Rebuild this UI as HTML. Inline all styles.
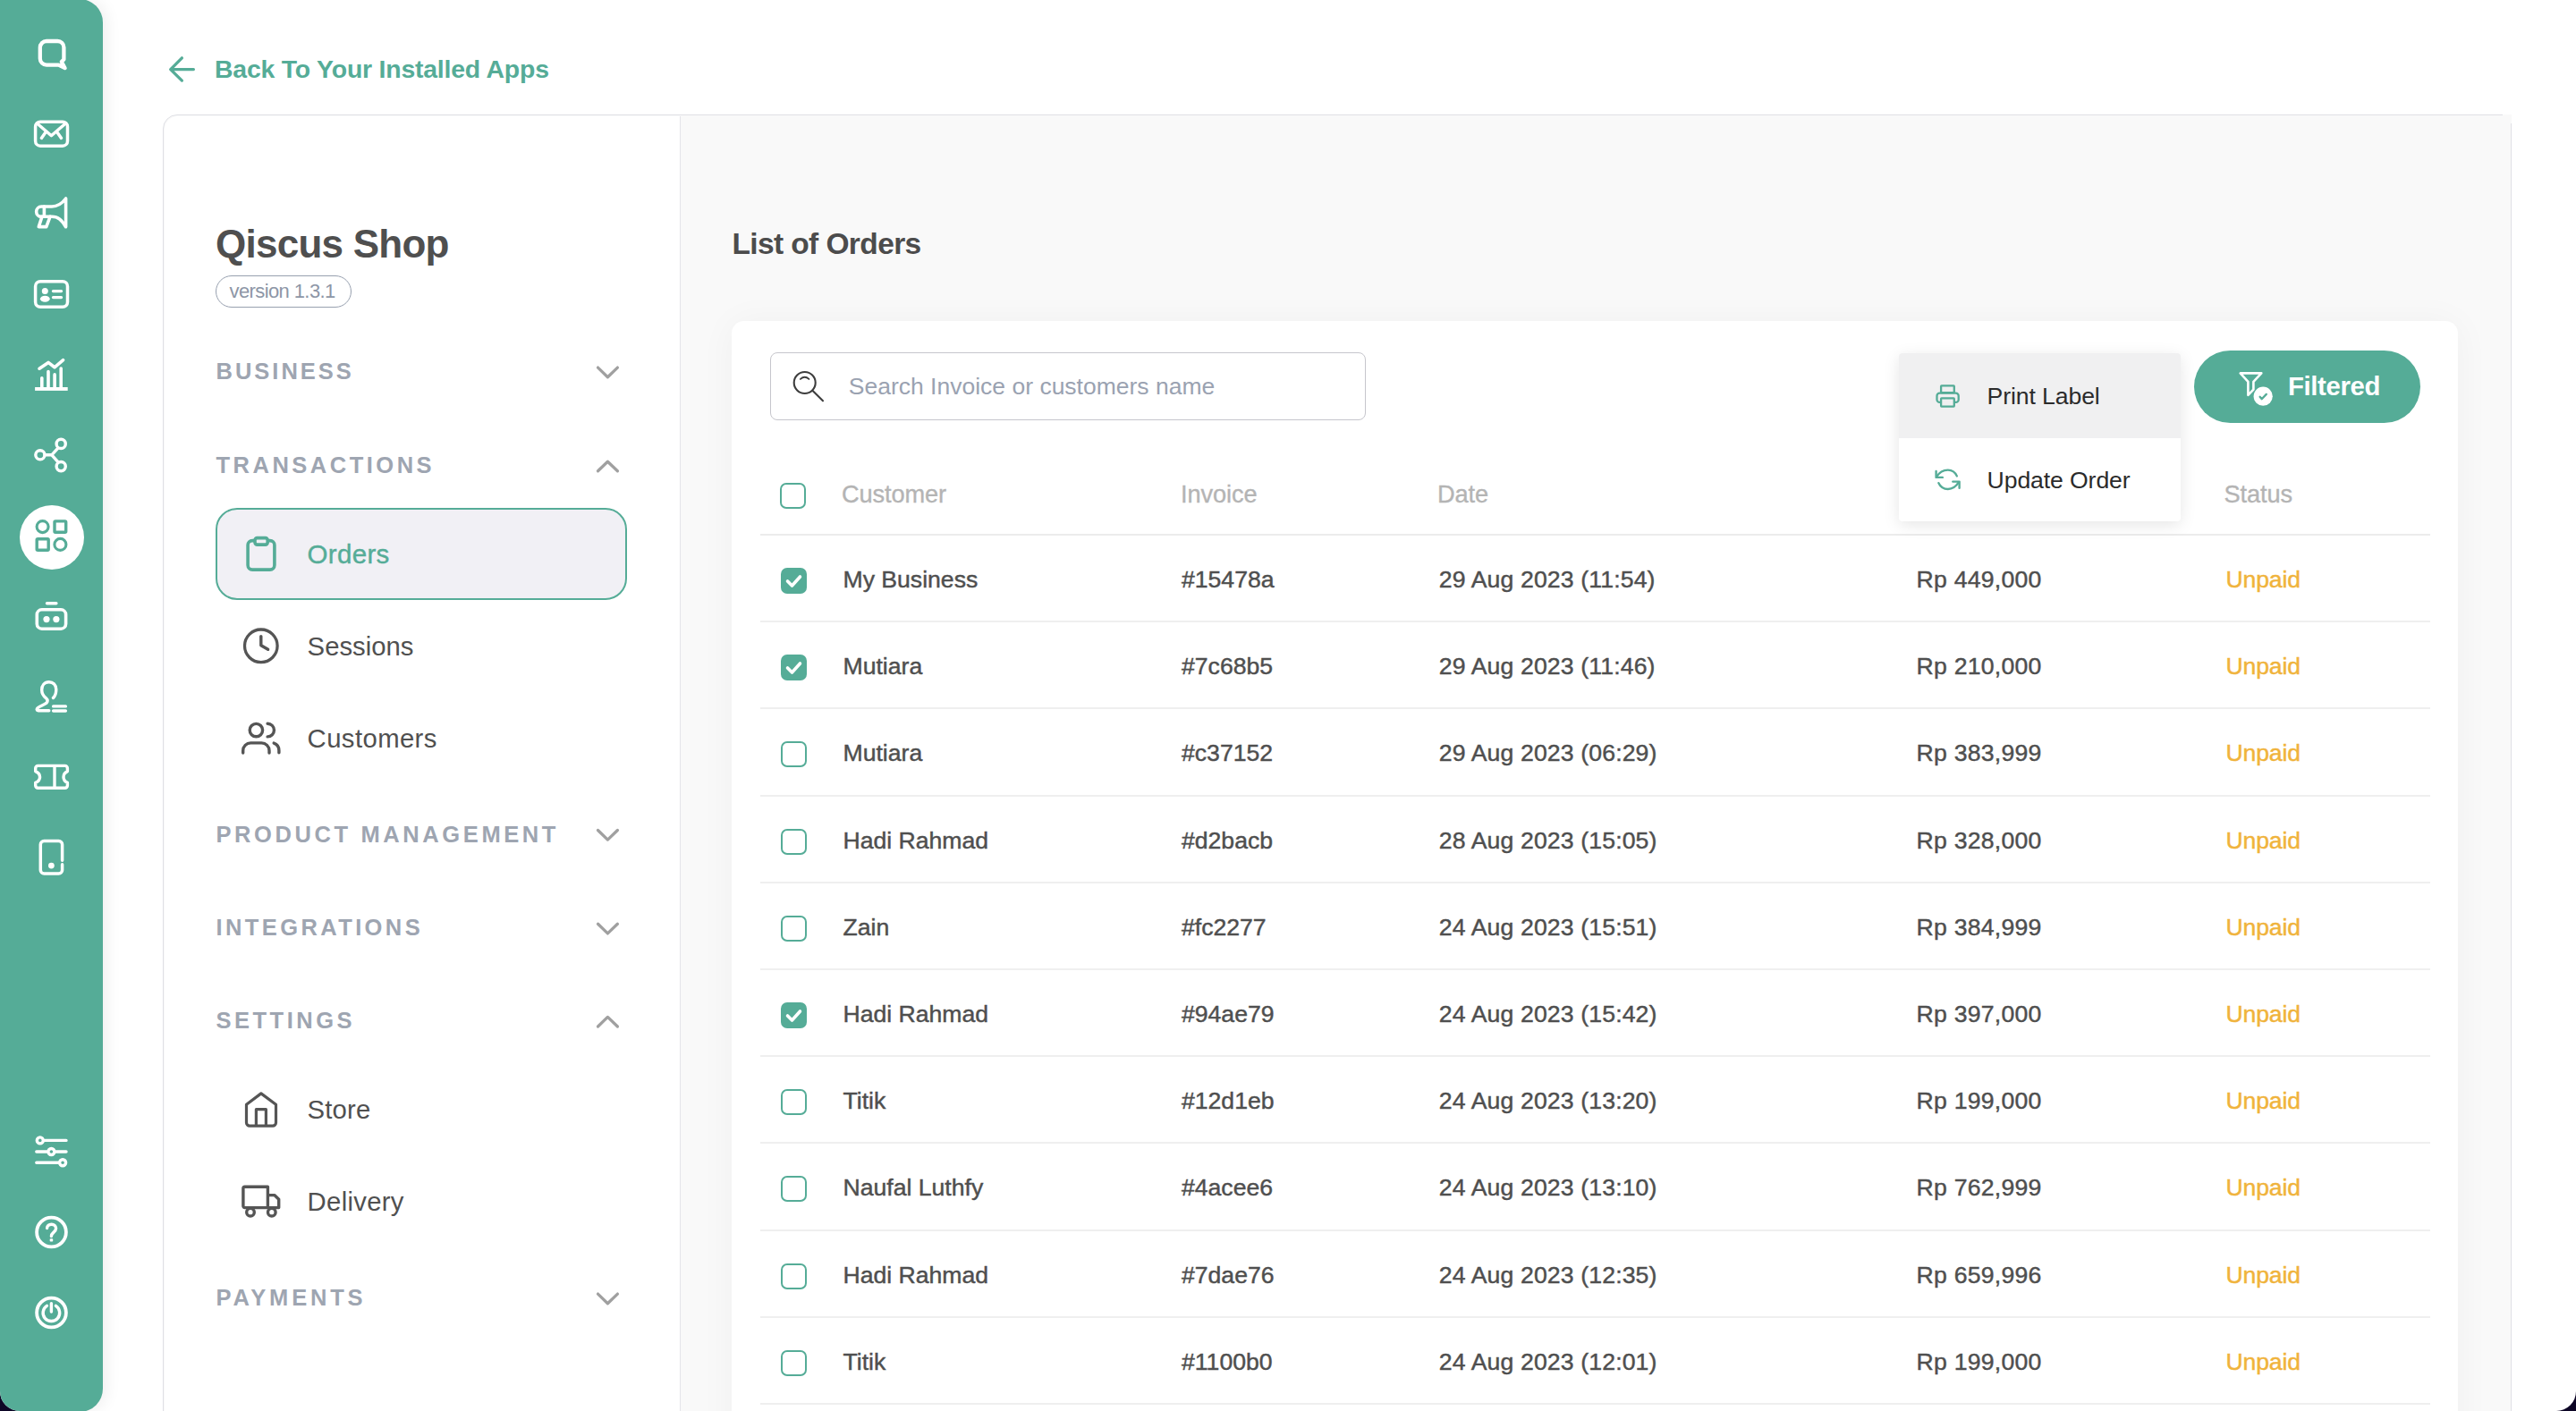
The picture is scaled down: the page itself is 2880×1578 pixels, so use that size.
<!DOCTYPE html>
<html><head><meta charset="utf-8"><title>Qiscus Shop - Orders</title><style>
html,body{margin:0;padding:0;}
html{background:#0d0626;}
body{width:2880px;height:1578px;overflow:hidden;background:#0d0626;font-family:"Liberation Sans",sans-serif;}
#win{position:absolute;left:0;top:0;width:2880px;height:1578px;overflow:hidden;background:#ffffff;border-radius:0 0 22px 22px;}
.t{position:absolute;white-space:nowrap;line-height:1;}
.i{position:absolute;overflow:visible;}
.b{position:absolute;box-sizing:border-box;}
@media (max-width:2200px){html{zoom:0.5;}}
</style><script>(function(){try{var w=window.innerWidth;if(w&&Math.abs(w-2880)>4){document.documentElement.style.zoom=(w/2880);}}catch(e){}})();</script></head><body><div id="win">
<div class="b" style="left:182px;top:128px;width:2626px;height:1500px;border:1.5px solid #dfe0e5;border-radius:16px 0 0 16px;background:#f9f9f9;"></div>
<div class="b" style="left:183.5px;top:129.5px;width:577px;height:1500px;background:#ffffff;border-right:1.5px solid #e4e4e9;border-top-left-radius:15px;"></div>
<div class="b" style="left:2798px;top:128px;width:10px;height:10px;background:#f9f9f9;"></div>
<svg class="i" style="left:176px;top:48px" width="60" height="60" viewBox="176 48 60 60"><path d="M216.4 77.6 H191 M203.4 64.8 L190.7 77.6 L203.4 90.1" fill="none" stroke="#55ac97" stroke-width="3.3" stroke-linecap="round" stroke-linejoin="round"/></svg>
<div class="t" style="left:240.00px;top:62.96px;font-size:28.4px;color:#55ac97;font-weight:700;letter-spacing:-0.2px;">Back To Your Installed Apps</div>
<div class="t" style="left:241.00px;top:251.45px;font-size:44px;color:#4f4f4f;font-weight:700;letter-spacing:-0.75px;">Qiscus Shop</div>
<div class="b" style="left:241px;top:308px;width:152px;height:36px;border:1.5px solid #97a0af;border-radius:18px;"></div>
<div class="t" style="left:256.50px;top:315.08px;font-size:22px;color:#8d96a6;font-weight:400;letter-spacing:-0.6px;">version 1.3.1</div>
<div class="t" style="left:241.50px;top:403.21px;font-size:25.5px;color:#9ea5b1;font-weight:700;letter-spacing:3.0px;">BUSINESS</div>
<svg class="i" style="left:650px;top:384px" width="60" height="60" viewBox="650 384 60 60"><path d="M668.5 411.1 L679.4 421.7 L690.4 411.1" fill="none" stroke="#a0a0a0" stroke-width="3.3" stroke-linecap="round" stroke-linejoin="round"/></svg>
<div class="t" style="left:241.50px;top:508.01px;font-size:25.5px;color:#9ea5b1;font-weight:700;letter-spacing:3.5px;">TRANSACTIONS</div>
<svg class="i" style="left:650px;top:489px" width="60" height="60" viewBox="650 489 60 60"><path d="M668.5 526.8000000000001 L679.4 516.2 L690.4 526.8000000000001" fill="none" stroke="#a0a0a0" stroke-width="3.3" stroke-linecap="round" stroke-linejoin="round"/></svg>
<div class="t" style="left:241.50px;top:920.61px;font-size:25.5px;color:#9ea5b1;font-weight:700;letter-spacing:3.6px;">PRODUCT MANAGEMENT</div>
<svg class="i" style="left:650px;top:902px" width="60" height="60" viewBox="650 902 60 60"><path d="M668.5 928.5 L679.4 939.1 L690.4 928.5" fill="none" stroke="#a0a0a0" stroke-width="3.3" stroke-linecap="round" stroke-linejoin="round"/></svg>
<div class="t" style="left:241.50px;top:1025.41px;font-size:25.5px;color:#9ea5b1;font-weight:700;letter-spacing:3.4px;">INTEGRATIONS</div>
<svg class="i" style="left:650px;top:1007px" width="60" height="60" viewBox="650 1007 60 60"><path d="M668.5 1033.3 L679.4 1043.9 L690.4 1033.3" fill="none" stroke="#a0a0a0" stroke-width="3.3" stroke-linecap="round" stroke-linejoin="round"/></svg>
<div class="t" style="left:241.50px;top:1129.21px;font-size:25.5px;color:#9ea5b1;font-weight:700;letter-spacing:3.5px;">SETTINGS</div>
<svg class="i" style="left:650px;top:1110px" width="60" height="60" viewBox="650 1110 60 60"><path d="M668.5 1148.0 L679.4 1137.3999999999999 L690.4 1148.0" fill="none" stroke="#a0a0a0" stroke-width="3.3" stroke-linecap="round" stroke-linejoin="round"/></svg>
<div class="t" style="left:241.50px;top:1439.21px;font-size:25.5px;color:#9ea5b1;font-weight:700;letter-spacing:3.8px;">PAYMENTS</div>
<svg class="i" style="left:650px;top:1420px" width="60" height="60" viewBox="650 1420 60 60"><path d="M668.5 1447.1 L679.4 1457.7 L690.4 1447.1" fill="none" stroke="#a0a0a0" stroke-width="3.3" stroke-linecap="round" stroke-linejoin="round"/></svg>
<div class="b" style="left:241px;top:568px;width:460px;height:103px;border:2px solid #55ac97;border-radius:24px;background:#f1f0f5;"></div>
<svg class="i" style="left:260px;top:590px" width="60" height="60" viewBox="260 590 60 60"><rect x="277.1" y="604.6" width="29.8" height="32.5" rx="5" fill="none" stroke="#55ac97" stroke-width="3.6"/><rect x="285" y="601.6" width="14.2" height="7.5" rx="2.5" fill="#f1f0f5" stroke="#55ac97" stroke-width="3.6"/></svg>
<div class="t" style="left:343.60px;top:604.83px;font-size:29.5px;color:#55ac97;font-weight:400;letter-spacing:0.3px;-webkit-text-stroke:0.4px #55ac97">Orders</div>
<svg class="i" style="left:260px;top:692px" width="60" height="60" viewBox="260 692 60 60"><circle cx="291.8" cy="722.3" r="18.3" fill="none" stroke="#555555" stroke-width="3.3"/><path d="M291.8 711.6 V721.8 L299.6 726.3" fill="none" stroke="#555555" stroke-width="3.4" stroke-linecap="round" stroke-linejoin="round"/></svg>
<div class="t" style="left:343.60px;top:707.70px;font-size:29.3px;color:#505050;font-weight:400;letter-spacing:0px;">Sessions</div>
<svg class="i" style="left:260px;top:796px" width="60" height="60" viewBox="260 796 60 60"><circle cx="286.4" cy="816.6" r="7.2" fill="none" stroke="#555555" stroke-width="3.4"/><path d="M299.1 809.2 A7.35 7.35 0 0 1 299.1 823.9" fill="none" stroke="#555555" stroke-width="3.4" stroke-linecap="round"/><path d="M271.7 842 V839.5 A8.6 8.6 0 0 1 280.3 830.9 H292.4 A8.6 8.6 0 0 1 301 839.5 V842" fill="none" stroke="#555555" stroke-width="3.4" stroke-linecap="round"/><path d="M306.2 831.1 A8.2 8.6 0 0 1 311.9 839.3 V841.8" fill="none" stroke="#555555" stroke-width="3.4" stroke-linecap="round"/></svg>
<div class="t" style="left:343.60px;top:810.90px;font-size:29.3px;color:#505050;font-weight:400;letter-spacing:0.4px;">Customers</div>
<svg class="i" style="left:260px;top:1212px" width="60" height="60" viewBox="260 1212 60 60"><path d="M275.5 1235.2 L291.9 1222.9 L308.5 1235.2 V1255.6 A3.6 3.6 0 0 1 304.9 1259.2 H279.1 A3.6 3.6 0 0 1 275.5 1255.6 Z" fill="none" stroke="#555555" stroke-width="3.2" stroke-linejoin="round"/><path d="M286.4 1259 V1240.7 H297.4 V1259" fill="none" stroke="#555555" stroke-width="3.2" stroke-linejoin="round"/></svg>
<div class="t" style="left:343.60px;top:1226.20px;font-size:29.3px;color:#505050;font-weight:400;letter-spacing:0.15px;">Store</div>
<svg class="i" style="left:260px;top:1314px" width="60" height="60" viewBox="260 1314 60 60"><path d="M271.9 1329 A1.8 1.8 0 0 1 273.7 1327.2 H299.4 V1350.6 H273.7 A1.8 1.8 0 0 1 271.9 1348.8 Z" fill="none" stroke="#555555" stroke-width="3.4" stroke-linejoin="round"/><path d="M299.4 1336.6 H306.8 L311.7 1341.2 V1350.6 H299.4" fill="none" stroke="#555555" stroke-width="3.4" stroke-linejoin="round"/><circle cx="280" cy="1355.7" r="4.3" fill="#fff" stroke="#555555" stroke-width="3.4"/><circle cx="303.8" cy="1355.7" r="4.3" fill="#fff" stroke="#555555" stroke-width="3.4"/></svg>
<div class="t" style="left:343.60px;top:1329.40px;font-size:29.3px;color:#505050;font-weight:400;letter-spacing:0.3px;">Delivery</div>
<div class="t" style="left:818.40px;top:256.24px;font-size:33.5px;color:#4c4c4c;font-weight:700;letter-spacing:-0.6px;">List of Orders</div>
<div class="b" style="left:818px;top:359px;width:1930px;height:1300px;background:#ffffff;border-radius:14px;box-shadow:0 2px 40px rgba(0,0,0,0.045);"></div>
<div class="b" style="left:861px;top:394px;width:666px;height:76px;border:1.5px solid #c6c6cc;border-radius:8px;background:#fff;"></div>
<svg class="i" style="left:874px;top:402px" width="60" height="60" viewBox="874 402 60 60"><circle cx="899.7" cy="428" r="12" fill="none" stroke="#3d3d3d" stroke-width="2.1"/><path d="M908.6 436.9 L920 448.3" stroke="#3d3d3d" stroke-width="2.1" stroke-linecap="round"/><path d="M894.9 423.9 Q899.7 419.8 904.4 423.9" fill="none" stroke="#3d3d3d" stroke-width="1.9" stroke-linecap="round"/></svg>
<div class="t" style="left:948.80px;top:418.57px;font-size:26.5px;color:#9aa2b1;font-weight:400;letter-spacing:0px;">Search Invoice or customers name</div>
<div class="b" style="left:872px;top:540px;width:29px;height:29px;border-radius:7px;border:2.6px solid #55ac97;background:#fff;"></div>
<div class="t" style="left:941.00px;top:538.58px;font-size:27.2px;color:#b4b4b4;font-weight:400;letter-spacing:-0.1px;-webkit-text-stroke:0.35px #b4b4b4">Customer</div>
<div class="t" style="left:1320.00px;top:538.58px;font-size:27.2px;color:#b4b4b4;font-weight:400;letter-spacing:-0.1px;-webkit-text-stroke:0.35px #b4b4b4">Invoice</div>
<div class="t" style="left:1607.00px;top:538.58px;font-size:27.2px;color:#b4b4b4;font-weight:400;letter-spacing:-0.1px;-webkit-text-stroke:0.35px #b4b4b4">Date</div>
<div class="t" style="left:2142.60px;top:538.58px;font-size:27.2px;color:#b4b4b4;font-weight:400;letter-spacing:-0.1px;-webkit-text-stroke:0.35px #b4b4b4">Amount</div>
<div class="t" style="left:2486.50px;top:538.58px;font-size:27.2px;color:#b4b4b4;font-weight:400;letter-spacing:-0.1px;-webkit-text-stroke:0.35px #b4b4b4">Status</div>
<div class="b" style="left:850px;top:597px;width:1867px;height:2px;background:#ececec;"></div>
<div class="b" style="left:873px;top:635px;width:29px;height:29px;border-radius:7px;background:#55ac97;"></div>
<svg class="i" style="left:873px;top:635px;" width="29" height="29" viewBox="0 0 29 29"><path d="M7.5 15 L12.5 20 L21.5 10" fill="none" stroke="#fff" stroke-width="3.6" stroke-linecap="round" stroke-linejoin="round"/></svg>
<div class="t" style="left:942.50px;top:634.98px;font-size:26.6px;color:#4f4f4f;font-weight:400;letter-spacing:0px;-webkit-text-stroke:0.45px #4f4f4f">My Business</div>
<div class="t" style="left:1321.00px;top:634.98px;font-size:26.6px;color:#4f4f4f;font-weight:400;letter-spacing:0px;-webkit-text-stroke:0.45px #4f4f4f">#15478a</div>
<div class="t" style="left:1608.70px;top:634.98px;font-size:26.6px;color:#4f4f4f;font-weight:400;letter-spacing:0.15px;-webkit-text-stroke:0.45px #4f4f4f">29 Aug 2023 (11:54)</div>
<div class="t" style="left:2142.60px;top:634.98px;font-size:26.6px;color:#4f4f4f;font-weight:400;letter-spacing:0.25px;-webkit-text-stroke:0.45px #4f4f4f">Rp 449,000</div>
<div class="t" style="left:2488.50px;top:634.98px;font-size:26.6px;color:#f0b33b;font-weight:400;letter-spacing:-0.15px;-webkit-text-stroke:0.45px #f0b33b">Unpaid</div>
<div class="b" style="left:850px;top:694.2px;width:1867px;height:2px;background:#efefef;"></div>
<div class="b" style="left:873px;top:732px;width:29px;height:29px;border-radius:7px;background:#55ac97;"></div>
<svg class="i" style="left:873px;top:732px;" width="29" height="29" viewBox="0 0 29 29"><path d="M7.5 15 L12.5 20 L21.5 10" fill="none" stroke="#fff" stroke-width="3.6" stroke-linecap="round" stroke-linejoin="round"/></svg>
<div class="t" style="left:942.50px;top:732.18px;font-size:26.6px;color:#4f4f4f;font-weight:400;letter-spacing:0px;-webkit-text-stroke:0.45px #4f4f4f">Mutiara</div>
<div class="t" style="left:1321.00px;top:732.18px;font-size:26.6px;color:#4f4f4f;font-weight:400;letter-spacing:0px;-webkit-text-stroke:0.45px #4f4f4f">#7c68b5</div>
<div class="t" style="left:1608.70px;top:732.18px;font-size:26.6px;color:#4f4f4f;font-weight:400;letter-spacing:0.15px;-webkit-text-stroke:0.45px #4f4f4f">29 Aug 2023 (11:46)</div>
<div class="t" style="left:2142.60px;top:732.18px;font-size:26.6px;color:#4f4f4f;font-weight:400;letter-spacing:0.25px;-webkit-text-stroke:0.45px #4f4f4f">Rp 210,000</div>
<div class="t" style="left:2488.50px;top:732.18px;font-size:26.6px;color:#f0b33b;font-weight:400;letter-spacing:-0.15px;-webkit-text-stroke:0.45px #f0b33b">Unpaid</div>
<div class="b" style="left:850px;top:791.4px;width:1867px;height:2px;background:#efefef;"></div>
<div class="b" style="left:873px;top:829px;width:29px;height:29px;border-radius:7px;border:2.6px solid #55ac97;background:#fff;"></div>
<div class="t" style="left:942.50px;top:829.38px;font-size:26.6px;color:#4f4f4f;font-weight:400;letter-spacing:0px;-webkit-text-stroke:0.45px #4f4f4f">Mutiara</div>
<div class="t" style="left:1321.00px;top:829.38px;font-size:26.6px;color:#4f4f4f;font-weight:400;letter-spacing:0px;-webkit-text-stroke:0.45px #4f4f4f">#c37152</div>
<div class="t" style="left:1608.70px;top:829.38px;font-size:26.6px;color:#4f4f4f;font-weight:400;letter-spacing:0.15px;-webkit-text-stroke:0.45px #4f4f4f">29 Aug 2023 (06:29)</div>
<div class="t" style="left:2142.60px;top:829.38px;font-size:26.6px;color:#4f4f4f;font-weight:400;letter-spacing:0.25px;-webkit-text-stroke:0.45px #4f4f4f">Rp 383,999</div>
<div class="t" style="left:2488.50px;top:829.38px;font-size:26.6px;color:#f0b33b;font-weight:400;letter-spacing:-0.15px;-webkit-text-stroke:0.45px #f0b33b">Unpaid</div>
<div class="b" style="left:850px;top:888.6px;width:1867px;height:2px;background:#efefef;"></div>
<div class="b" style="left:873px;top:927px;width:29px;height:29px;border-radius:7px;border:2.6px solid #55ac97;background:#fff;"></div>
<div class="t" style="left:942.50px;top:926.58px;font-size:26.6px;color:#4f4f4f;font-weight:400;letter-spacing:0px;-webkit-text-stroke:0.45px #4f4f4f">Hadi Rahmad</div>
<div class="t" style="left:1321.00px;top:926.58px;font-size:26.6px;color:#4f4f4f;font-weight:400;letter-spacing:0px;-webkit-text-stroke:0.45px #4f4f4f">#d2bacb</div>
<div class="t" style="left:1608.70px;top:926.58px;font-size:26.6px;color:#4f4f4f;font-weight:400;letter-spacing:0.15px;-webkit-text-stroke:0.45px #4f4f4f">28 Aug 2023 (15:05)</div>
<div class="t" style="left:2142.60px;top:926.58px;font-size:26.6px;color:#4f4f4f;font-weight:400;letter-spacing:0.25px;-webkit-text-stroke:0.45px #4f4f4f">Rp 328,000</div>
<div class="t" style="left:2488.50px;top:926.58px;font-size:26.6px;color:#f0b33b;font-weight:400;letter-spacing:-0.15px;-webkit-text-stroke:0.45px #f0b33b">Unpaid</div>
<div class="b" style="left:850px;top:985.8px;width:1867px;height:2px;background:#efefef;"></div>
<div class="b" style="left:873px;top:1024px;width:29px;height:29px;border-radius:7px;border:2.6px solid #55ac97;background:#fff;"></div>
<div class="t" style="left:942.50px;top:1023.78px;font-size:26.6px;color:#4f4f4f;font-weight:400;letter-spacing:0px;-webkit-text-stroke:0.45px #4f4f4f">Zain</div>
<div class="t" style="left:1321.00px;top:1023.78px;font-size:26.6px;color:#4f4f4f;font-weight:400;letter-spacing:0px;-webkit-text-stroke:0.45px #4f4f4f">#fc2277</div>
<div class="t" style="left:1608.70px;top:1023.78px;font-size:26.6px;color:#4f4f4f;font-weight:400;letter-spacing:0.15px;-webkit-text-stroke:0.45px #4f4f4f">24 Aug 2023 (15:51)</div>
<div class="t" style="left:2142.60px;top:1023.78px;font-size:26.6px;color:#4f4f4f;font-weight:400;letter-spacing:0.25px;-webkit-text-stroke:0.45px #4f4f4f">Rp 384,999</div>
<div class="t" style="left:2488.50px;top:1023.78px;font-size:26.6px;color:#f0b33b;font-weight:400;letter-spacing:-0.15px;-webkit-text-stroke:0.45px #f0b33b">Unpaid</div>
<div class="b" style="left:850px;top:1083.0px;width:1867px;height:2px;background:#efefef;"></div>
<div class="b" style="left:873px;top:1121px;width:29px;height:29px;border-radius:7px;background:#55ac97;"></div>
<svg class="i" style="left:873px;top:1121px;" width="29" height="29" viewBox="0 0 29 29"><path d="M7.5 15 L12.5 20 L21.5 10" fill="none" stroke="#fff" stroke-width="3.6" stroke-linecap="round" stroke-linejoin="round"/></svg>
<div class="t" style="left:942.50px;top:1120.98px;font-size:26.6px;color:#4f4f4f;font-weight:400;letter-spacing:0px;-webkit-text-stroke:0.45px #4f4f4f">Hadi Rahmad</div>
<div class="t" style="left:1321.00px;top:1120.98px;font-size:26.6px;color:#4f4f4f;font-weight:400;letter-spacing:0px;-webkit-text-stroke:0.45px #4f4f4f">#94ae79</div>
<div class="t" style="left:1608.70px;top:1120.98px;font-size:26.6px;color:#4f4f4f;font-weight:400;letter-spacing:0.15px;-webkit-text-stroke:0.45px #4f4f4f">24 Aug 2023 (15:42)</div>
<div class="t" style="left:2142.60px;top:1120.98px;font-size:26.6px;color:#4f4f4f;font-weight:400;letter-spacing:0.25px;-webkit-text-stroke:0.45px #4f4f4f">Rp 397,000</div>
<div class="t" style="left:2488.50px;top:1120.98px;font-size:26.6px;color:#f0b33b;font-weight:400;letter-spacing:-0.15px;-webkit-text-stroke:0.45px #f0b33b">Unpaid</div>
<div class="b" style="left:850px;top:1180.2px;width:1867px;height:2px;background:#efefef;"></div>
<div class="b" style="left:873px;top:1218px;width:29px;height:29px;border-radius:7px;border:2.6px solid #55ac97;background:#fff;"></div>
<div class="t" style="left:942.50px;top:1218.18px;font-size:26.6px;color:#4f4f4f;font-weight:400;letter-spacing:0px;-webkit-text-stroke:0.45px #4f4f4f">Titik</div>
<div class="t" style="left:1321.00px;top:1218.18px;font-size:26.6px;color:#4f4f4f;font-weight:400;letter-spacing:0px;-webkit-text-stroke:0.45px #4f4f4f">#12d1eb</div>
<div class="t" style="left:1608.70px;top:1218.18px;font-size:26.6px;color:#4f4f4f;font-weight:400;letter-spacing:0.15px;-webkit-text-stroke:0.45px #4f4f4f">24 Aug 2023 (13:20)</div>
<div class="t" style="left:2142.60px;top:1218.18px;font-size:26.6px;color:#4f4f4f;font-weight:400;letter-spacing:0.25px;-webkit-text-stroke:0.45px #4f4f4f">Rp 199,000</div>
<div class="t" style="left:2488.50px;top:1218.18px;font-size:26.6px;color:#f0b33b;font-weight:400;letter-spacing:-0.15px;-webkit-text-stroke:0.45px #f0b33b">Unpaid</div>
<div class="b" style="left:850px;top:1277.4px;width:1867px;height:2px;background:#efefef;"></div>
<div class="b" style="left:873px;top:1315px;width:29px;height:29px;border-radius:7px;border:2.6px solid #55ac97;background:#fff;"></div>
<div class="t" style="left:942.50px;top:1315.38px;font-size:26.6px;color:#4f4f4f;font-weight:400;letter-spacing:0px;-webkit-text-stroke:0.45px #4f4f4f">Naufal Luthfy</div>
<div class="t" style="left:1321.00px;top:1315.38px;font-size:26.6px;color:#4f4f4f;font-weight:400;letter-spacing:0px;-webkit-text-stroke:0.45px #4f4f4f">#4acee6</div>
<div class="t" style="left:1608.70px;top:1315.38px;font-size:26.6px;color:#4f4f4f;font-weight:400;letter-spacing:0.15px;-webkit-text-stroke:0.45px #4f4f4f">24 Aug 2023 (13:10)</div>
<div class="t" style="left:2142.60px;top:1315.38px;font-size:26.6px;color:#4f4f4f;font-weight:400;letter-spacing:0.25px;-webkit-text-stroke:0.45px #4f4f4f">Rp 762,999</div>
<div class="t" style="left:2488.50px;top:1315.38px;font-size:26.6px;color:#f0b33b;font-weight:400;letter-spacing:-0.15px;-webkit-text-stroke:0.45px #f0b33b">Unpaid</div>
<div class="b" style="left:850px;top:1374.6px;width:1867px;height:2px;background:#efefef;"></div>
<div class="b" style="left:873px;top:1413px;width:29px;height:29px;border-radius:7px;border:2.6px solid #55ac97;background:#fff;"></div>
<div class="t" style="left:942.50px;top:1412.58px;font-size:26.6px;color:#4f4f4f;font-weight:400;letter-spacing:0px;-webkit-text-stroke:0.45px #4f4f4f">Hadi Rahmad</div>
<div class="t" style="left:1321.00px;top:1412.58px;font-size:26.6px;color:#4f4f4f;font-weight:400;letter-spacing:0px;-webkit-text-stroke:0.45px #4f4f4f">#7dae76</div>
<div class="t" style="left:1608.70px;top:1412.58px;font-size:26.6px;color:#4f4f4f;font-weight:400;letter-spacing:0.15px;-webkit-text-stroke:0.45px #4f4f4f">24 Aug 2023 (12:35)</div>
<div class="t" style="left:2142.60px;top:1412.58px;font-size:26.6px;color:#4f4f4f;font-weight:400;letter-spacing:0.25px;-webkit-text-stroke:0.45px #4f4f4f">Rp 659,996</div>
<div class="t" style="left:2488.50px;top:1412.58px;font-size:26.6px;color:#f0b33b;font-weight:400;letter-spacing:-0.15px;-webkit-text-stroke:0.45px #f0b33b">Unpaid</div>
<div class="b" style="left:850px;top:1471.8px;width:1867px;height:2px;background:#efefef;"></div>
<div class="b" style="left:873px;top:1510px;width:29px;height:29px;border-radius:7px;border:2.6px solid #55ac97;background:#fff;"></div>
<div class="t" style="left:942.50px;top:1509.78px;font-size:26.6px;color:#4f4f4f;font-weight:400;letter-spacing:0px;-webkit-text-stroke:0.45px #4f4f4f">Titik</div>
<div class="t" style="left:1321.00px;top:1509.78px;font-size:26.6px;color:#4f4f4f;font-weight:400;letter-spacing:0px;-webkit-text-stroke:0.45px #4f4f4f">#1100b0</div>
<div class="t" style="left:1608.70px;top:1509.78px;font-size:26.6px;color:#4f4f4f;font-weight:400;letter-spacing:0.15px;-webkit-text-stroke:0.45px #4f4f4f">24 Aug 2023 (12:01)</div>
<div class="t" style="left:2142.60px;top:1509.78px;font-size:26.6px;color:#4f4f4f;font-weight:400;letter-spacing:0.25px;-webkit-text-stroke:0.45px #4f4f4f">Rp 199,000</div>
<div class="t" style="left:2488.50px;top:1509.78px;font-size:26.6px;color:#f0b33b;font-weight:400;letter-spacing:-0.15px;-webkit-text-stroke:0.45px #f0b33b">Unpaid</div>
<div class="b" style="left:850px;top:1569.0px;width:1867px;height:2px;background:#efefef;"></div>
<div class="b" style="left:2123px;top:395px;width:315px;height:188px;background:#ffffff;box-shadow:0 4px 18px rgba(0,0,0,0.10);border-radius:4px;"></div>
<div class="b" style="left:2123px;top:395px;width:315px;height:95px;background:#f0f0f1;border-radius:4px 4px 0 0;"></div>
<svg class="i" style="left:2148px;top:412px" width="60" height="60" viewBox="2148 412 60 60"><rect x="2170.1" y="431.4" width="14.7" height="7.8" rx="0.6" fill="none" stroke="#55ac97" stroke-width="2.3"/><path d="M2170.1 449.9 H2168.5 A3 3 0 0 1 2165.5 446.9 V442.7 A3 3 0 0 1 2168.5 439.7 H2186.7 A3 3 0 0 1 2189.7 442.7 V446.9 A3 3 0 0 1 2186.7 449.9 H2184.8" fill="none" stroke="#55ac97" stroke-width="2.3"/><rect x="2170.1" y="445.4" width="14.7" height="9.2" rx="0.6" fill="none" stroke="#55ac97" stroke-width="2.3"/></svg>
<div class="t" style="left:2221.60px;top:429.98px;font-size:26.6px;color:#2b2b2b;font-weight:400;letter-spacing:-0.1px;">Print Label</div>
<svg class="i" style="left:2148px;top:506px" width="60" height="60" viewBox="2148 506 60 60"><path d="M2165.2 533.2 C2168 528.5 2172.5 525.6 2177.8 525.6 C2182.3 525.6 2186 528.2 2187.8 532.4" fill="none" stroke="#55ac97" stroke-width="2.4" stroke-linecap="round"/><path d="M2164.6 526.9 V533.9 H2171.8" fill="none" stroke="#55ac97" stroke-width="2.4" stroke-linecap="round" stroke-linejoin="round"/><path d="M2190 539.2 C2187 544 2182.8 547 2177.8 547 C2173 547 2169.4 544.4 2167.4 540.2" fill="none" stroke="#55ac97" stroke-width="2.4" stroke-linecap="round"/><path d="M2190.6 545.8 V538.6 H2183.3" fill="none" stroke="#55ac97" stroke-width="2.4" stroke-linecap="round" stroke-linejoin="round"/></svg>
<div class="t" style="left:2221.60px;top:523.98px;font-size:26.6px;color:#2b2b2b;font-weight:400;letter-spacing:-0.1px;">Update Order</div>
<div class="b" style="left:2453px;top:392px;width:253px;height:81px;background:#55ac97;border-radius:41px;"></div>
<svg class="i" style="left:2490px;top:400px" width="60" height="60" viewBox="2490 400 60 60"><path d="M2504.7 417.4 H2528.3 L2519.4 426.8 V435.7 L2513.4 441.9 V426.8 Z" fill="none" stroke="#fff" stroke-width="2.6" stroke-linejoin="round"/><circle cx="2530.2" cy="443.2" r="10.6" fill="#fff"/><path d="M2526.6 443.8 L2528.7 446.2 L2533.8 440.9" fill="none" stroke="#55ac97" stroke-width="2.3" stroke-linecap="round" stroke-linejoin="round"/></svg>
<div class="t" style="left:2558.00px;top:417.20px;font-size:29.3px;color:#ffffff;font-weight:700;letter-spacing:-0.35px;">Filtered</div>
<div class="b" style="left:0;top:-1px;width:115px;height:1580px;background:#55ac97;border-radius:0 26px 26px 0;box-shadow:4px 0 18px rgba(0,0,0,0.065);"></div>
<svg class="i" style="left:0;top:0" width="115" height="1578" viewBox="0 0 115 1578"><path d="M52 46 H64.4 A7 7 0 0 1 71.4 53 V66.5 L68.8 69 L72.6 76.2 L65.5 72.6 H52 A7.2 7.2 0 0 1 44.8 65.4 V53.2 A7.2 7.2 0 0 1 52 46 Z" fill="none" stroke="#fff" stroke-linecap="round" stroke-linejoin="round" stroke-width="4.3"/><rect x="39.6" y="136.2" width="35.9" height="27" rx="5.5" fill="none" stroke="#fff" stroke-linecap="round" stroke-linejoin="round" stroke-width="3.5"/><path d="M42.3 138.7 L57.4 151.8 L72.5 138.7 M50.6 148.4 L46.4 154.4 M64.3 148.4 L68.5 154.4" fill="none" stroke="#fff" stroke-linecap="round" stroke-linejoin="round" stroke-width="3.5"/><path d="M73.6 222 V253.8 C69 246 65 242.3 58 242.3 H46.3 A5.65 5.65 0 0 1 46.3 231 H58 C65 231 69 228 73.6 222 Z" fill="none" stroke="#fff" stroke-linecap="round" stroke-linejoin="round" stroke-width="3.6"/><path d="M49.4 231 V242.3" fill="none" stroke="#fff" stroke-linecap="round" stroke-linejoin="round" stroke-width="3.6"/><path d="M47 242.3 L43.3 253.6 H51.8 L56 242.3" fill="none" stroke="#fff" stroke-linecap="round" stroke-linejoin="round" stroke-width="3.6"/><rect x="39.6" y="314.7" width="35.9" height="28.6" rx="5.5" fill="none" stroke="#fff" stroke-linecap="round" stroke-linejoin="round" stroke-width="3.5"/><circle cx="50.3" cy="325.4" r="3.5" fill="#fff"/><ellipse cx="50.3" cy="334.3" rx="5.4" ry="3.5" fill="#fff"/><path d="M59.5 325.6 H68.5 M59.5 332.6 H68.5" fill="none" stroke="#fff" stroke-linecap="round" stroke-linejoin="round" stroke-width="3.4"/><rect x="39.1" y="433" width="36.6" height="3.9" fill="#fff"/><path d="M46.8 422.8 V434 M54 415.5 V434 M61.1 418.9 V434 M68.2 412 V434" fill="none" stroke="#fff" stroke-linecap="round" stroke-linejoin="round" stroke-width="3.6" stroke-linecap="round"/><path d="M44 412.2 L54 405.4 L61 410.8 L70.6 402.6" fill="none" stroke="#fff" stroke-linecap="round" stroke-linejoin="round" stroke-width="3.6"/><circle cx="44.9" cy="508.8" r="5.1" fill="none" stroke="#fff" stroke-linecap="round" stroke-linejoin="round" stroke-width="3.4"/><circle cx="68.2" cy="496.4" r="5.1" fill="none" stroke="#fff" stroke-linecap="round" stroke-linejoin="round" stroke-width="3.4"/><circle cx="68.2" cy="521.6" r="5.1" fill="none" stroke="#fff" stroke-linecap="round" stroke-linejoin="round" stroke-width="3.4"/><path d="M50 508.8 H57.8 L64.4 501.6 M57.8 508.8 L64.4 516.2" fill="none" stroke="#fff" stroke-linecap="round" stroke-linejoin="round" stroke-width="3.4"/><circle cx="58" cy="601" r="36" fill="#fff"/><circle cx="47.6" cy="589.1" r="6.5" fill="none" stroke="#55ac97" stroke-linejoin="round" stroke-width="3.1"/><rect x="61" y="582.9" width="12.7" height="12.4" rx="1" fill="none" stroke="#55ac97" stroke-linejoin="round" stroke-width="3.4"/><rect x="41.2" y="602.7" width="13" height="12.6" rx="1" fill="none" stroke="#55ac97" stroke-linejoin="round" stroke-width="3.4"/><circle cx="67.4" cy="608.9" r="6.5" fill="none" stroke="#55ac97" stroke-linejoin="round" stroke-width="3.1"/><path d="M52.5 674.7 H62.9" fill="none" stroke="#fff" stroke-linecap="round" stroke-linejoin="round" stroke-width="3.4"/><rect x="41.3" y="681.8" width="32.3" height="21.4" rx="5.5" fill="none" stroke="#fff" stroke-linecap="round" stroke-linejoin="round" stroke-width="3.6"/><circle cx="52" cy="692.6" r="3.6" fill="#fff"/><circle cx="62.9" cy="692.6" r="3.6" fill="#fff"/><path d="M59.5 780.5 C62 778 62.8 775 62.8 771 C62.6 765.8 59.5 762.8 54.7 762.8 C49.6 762.8 46.7 766.5 46.7 771.5 C46.7 776.2 49 778.8 51.5 780.8 C53.2 782.4 53.6 784.3 52 786.2 C49.5 788.2 45.2 789.6 42.3 791.6 C40.6 793 41 794.7 42.8 794.7 H54.8" fill="none" stroke="#fff" stroke-linecap="round" stroke-linejoin="round" stroke-width="3.4"/><path d="M59.6 789.9 H73.4 M59.6 795 H73.4" fill="none" stroke="#fff" stroke-linecap="round" stroke-linejoin="round" stroke-width="3.4"/><path d="M42.5 856.4 H72.6 A2.8 2.8 0 0 1 75.4 859.2 V862.6 C72.5 864 71 866.2 71 869 C71 871.8 72.5 874 75.4 875.4 V878.5 A2.8 2.8 0 0 1 72.6 881.3 H42.5 A2.8 2.8 0 0 1 39.7 878.5 V875.4 C42.8 874 44.6 871.8 44.6 869 C44.6 866.2 42.8 864 39.7 862.6 V859.2 A2.8 2.8 0 0 1 42.5 856.4 Z" fill="none" stroke="#fff" stroke-linecap="round" stroke-linejoin="round" stroke-width="3.4"/><path d="M61 857 V881" fill="none" stroke="#fff" stroke-linecap="round" stroke-linejoin="round" stroke-width="3.4"/><path d="M69.6 966.8 V973 A4 4 0 0 1 65.6 977 H49.3 A4 4 0 0 1 45.3 973 V944.6 A4 4 0 0 1 49.3 940.6 H65.6 A4 4 0 0 1 69.6 944.6 V962.2" fill="none" stroke="#fff" stroke-linecap="round" stroke-linejoin="round" stroke-width="3.5"/><circle cx="57.4" cy="968.1" r="3.4" fill="#fff"/><path d="M49.9 1275.4 H74 M40.8 1288 H52.3 M62.5 1288 H74 M40.8 1300.3 H65" fill="none" stroke="#fff" stroke-linecap="round" stroke-linejoin="round" stroke-width="3.4"/><circle cx="44.8" cy="1275.4" r="3.5" fill="none" stroke="#fff" stroke-linecap="round" stroke-linejoin="round" stroke-width="3.4"/><circle cx="57.4" cy="1288" r="3.5" fill="none" stroke="#fff" stroke-linecap="round" stroke-linejoin="round" stroke-width="3.4"/><circle cx="70.1" cy="1300.3" r="3.5" fill="none" stroke="#fff" stroke-linecap="round" stroke-linejoin="round" stroke-width="3.4"/><circle cx="57.5" cy="1378" r="16.4" fill="none" stroke="#fff" stroke-linecap="round" stroke-linejoin="round" stroke-width="3.8"/><path d="M52.6 1373.6 C52.6 1370.8 54.8 1369.2 57.6 1369.2 C60.4 1369.2 62.6 1371 62.6 1373.8 C62.6 1376 61.2 1377.2 59.8 1378.4 C58.4 1379.6 57.4 1380.8 57.4 1382.6" fill="none" stroke="#fff" stroke-linecap="round" stroke-linejoin="round" stroke-width="3.4"/><rect x="55.7" y="1385.2" width="3.5" height="3.4" rx="0.8" fill="#fff"/><circle cx="57.5" cy="1468" r="16.4" fill="none" stroke="#fff" stroke-linecap="round" stroke-linejoin="round" stroke-width="3.8"/><path d="M52.4 1460.4 A9.3 9.3 0 1 0 62.4 1460.4" fill="none" stroke="#fff" stroke-linecap="round" stroke-linejoin="round" stroke-width="3.4"/><path d="M57.4 1457.8 V1467" fill="none" stroke="#fff" stroke-linecap="round" stroke-linejoin="round" stroke-width="3.4" stroke-linecap="butt"/></svg>
</div></body></html>
